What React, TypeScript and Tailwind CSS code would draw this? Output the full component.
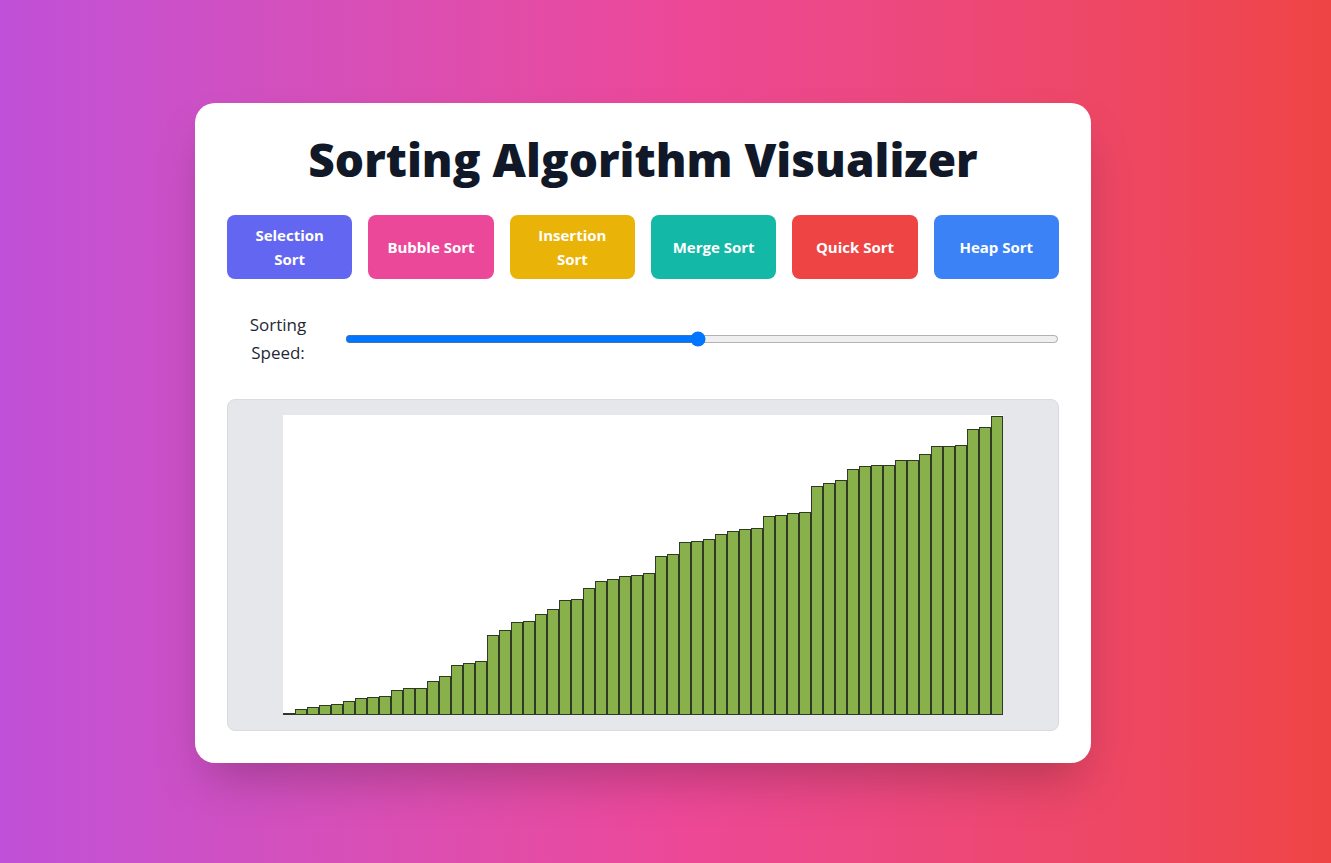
import { useState } from "react";

const algorithms = [
  { label: "Selection Sort", color: "bg-[#6366f1]" },
  { label: "Bubble Sort", color: "bg-[#ec4899]" },
  { label: "Insertion Sort", color: "bg-[#eab308]" },
  { label: "Merge Sort", color: "bg-[#14b8a6]" },
  { label: "Quick Sort", color: "bg-[#ef4444]" },
  { label: "Heap Sort", color: "bg-[#3b82f6]" },
];

// bar heights in px, already sorted
const bars = [
  2, 6, 8, 10, 11, 14, 17, 18, 19, 25, 27, 27, 34, 39, 50, 52, 54, 80, 85, 93,
  94, 101, 106, 115, 116, 127, 134, 136, 139, 140, 142, 159, 161, 173, 174, 176,
  181, 184, 186, 187, 199, 200, 202, 203, 229, 232, 235, 246, 249, 250, 250, 255,
  255, 261, 269, 269, 270, 286, 288, 299,
];

export default function App() {
  const [speed, setSpeed] = useState(500);

  return (
    <div
      className="min-h-screen bg-linear-to-r from-[#c050d8] via-[#ec4899] to-[#ef4444] pt-[103px] pb-[100px] pl-[195px]"
      style={{ fontFamily: '"Open Sans", "Noto Sans", sans-serif' }}
    >
      <div className="w-[896px] rounded-[20px] bg-white p-8 shadow-2xl">
        <h1 className="mb-8 text-center text-[46px] leading-[48px] font-extrabold text-[#111827]">
          Sorting Algorithm Visualizer
        </h1>

        <div className="mb-8 flex gap-4">
          {algorithms.map((a) => (
            <button
              key={a.label}
              className={`flex-1 rounded-lg px-4 py-2 text-[15px] leading-6 font-bold text-white ${a.color}`}
            >
              {a.label}
            </button>
          ))}
        </div>

        <div className="mb-8 flex items-center gap-4">
          <label className="w-[102px] text-center text-[17px] leading-[28px] text-[#1f2937]">
            Sorting Speed:
          </label>
          <input
            type="range"
            min={10}
            max={1000}
            value={speed}
            onChange={(e) => setSpeed(Number(e.target.value))}
            className="flex-1"
          />
        </div>

        <div className="flex justify-center rounded-lg border border-[#d9dbe0] bg-[#e5e7eb] p-[15px]">
          <div className="flex h-[300px] w-[720px] items-end bg-white">
            {bars.map((h, i) => (
              <div
                key={i}
                className="w-[12px] border border-[#2f3a24] bg-[#88b04b]"
                style={{ height: h }}
              />
            ))}
          </div>
        </div>
      </div>
    </div>
  );
}
